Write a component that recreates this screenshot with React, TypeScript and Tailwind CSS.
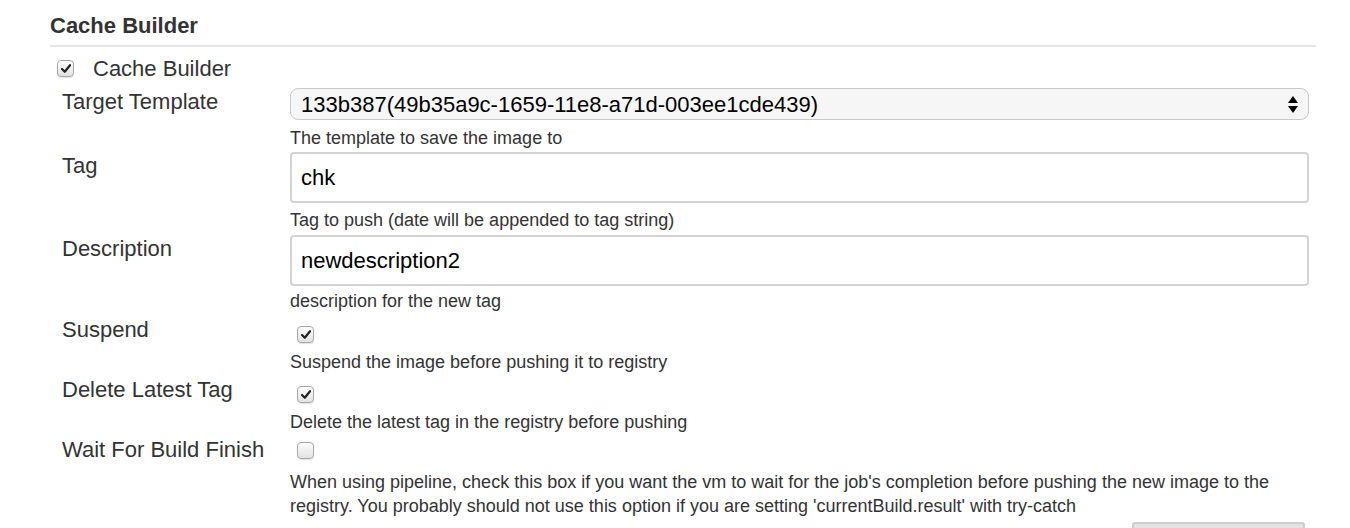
import React from 'react'

const CheckMark = () => (
    <svg width="10" height="9" viewBox="0 0 10 9" className="block">
        <path d="M1 5 L3.8 7.8 L9 1.2" fill="none" stroke="#222" strokeWidth="2.2" strokeLinecap="round" strokeLinejoin="round" />
    </svg>
)

const Checkbox = ({ checked }: { checked?: boolean }) => (
    <span className="inline-flex h-[17px] w-[17px] items-center justify-center rounded-[4px] border border-[#a8a8a8] bg-gradient-to-b from-[#fdfdfd] to-[#e2e2e2] shadow-[0_1px_1px_rgba(0,0,0,0.12)]">
        {checked && <CheckMark />}
    </span>
)

const Label = ({ children }: { children: React.ReactNode }) => (
    <div className="w-[240px] shrink-0 pl-[12px] text-[22px] leading-[28px] text-[#333]">{children}</div>
)

const Help = ({ children, className = '' }: { children: React.ReactNode; className?: string }) => (
    <div className={`pl-[240px] text-[18px] leading-[24px] text-[#333] ${className}`}>{children}</div>
)

const App = () => {
    return (
        <div className="min-h-[528px] overflow-hidden bg-white pl-[50px] pr-[34px] font-['Liberation_Sans',Arial,sans-serif]">
            {/* Section header */}
            <div className="flex h-[47px] items-center border-b-2 border-[#e6e6e6] pt-[6px]">
                <h2 className="text-[22px] font-bold text-[#333]">Cache Builder</h2>
            </div>

            <div className="mt-[9px] flex h-[24px] items-center pl-[7px]">
                <Checkbox checked />
                <span className="ml-[19px] text-[22px] text-[#333]">Cache Builder</span>
            </div>

            {/* Target Template */}
            <div className="mt-[8px] flex pr-[7px]">
                <Label>Target Template</Label>
                <div className="relative flex h-[32px] flex-1 items-center rounded-[8px] border border-[#c9c9c9] bg-[#f6f6f6] pl-[10px] text-[22px] text-black">
                    133b387(49b35a9c-1659-11e8-a71d-003ee1cde439)
                    <div className="absolute right-[10px] top-[7px] flex flex-col gap-[3px]">
                        <span className="block h-0 w-0 border-x-[5px] border-b-[7px] border-x-transparent border-b-black"></span>
                        <span className="block h-0 w-0 border-x-[5px] border-t-[7px] border-x-transparent border-t-black"></span>
                    </div>
                </div>
            </div>
            <Help className="mt-[6px]">The template to save the image to</Help>

            {/* Tag */}
            <div className="mt-[2px] flex pr-[7px]">
                <Label>Tag</Label>
                <div className="flex h-[51px] flex-1 items-center rounded-[4px] border-2 border-[#d4d4d4] pl-[9px] text-[22px] text-black">chk</div>
            </div>
            <Help className="mt-[5px]">Tag to push (date will be appended to tag string)</Help>

            {/* Description */}
            <div className="mt-[3px] flex pr-[7px]">
                <Label>Description</Label>
                <div className="flex h-[51px] flex-1 items-center rounded-[4px] border-2 border-[#d4d4d4] pl-[9px] text-[22px] text-black">newdescription2</div>
            </div>
            <Help className="mt-[3px]">description for the new tag</Help>

            {/* Suspend */}
            <div className="mt-[3px] flex h-[28px]">
                <Label>Suspend</Label>
                <div className="pl-[7px] pt-[6px]"><Checkbox checked /></div>
            </div>
            <Help className="mt-[6px]">Suspend the image before pushing it to registry</Help>

            {/* Delete Latest Tag */}
            <div className="mt-[2px] flex h-[28px]">
                <Label>Delete Latest Tag</Label>
                <div className="pl-[7px] pt-[6px]"><Checkbox checked /></div>
            </div>
            <Help className="mt-[6px]">Delete the latest tag in the registry before pushing</Help>

            {/* Wait For Build Finish */}
            <div className="mt-[2px] flex h-[28px]">
                <Label>Wait For Build Finish</Label>
                <div className="pl-[7px] pt-[6px]"><Checkbox /></div>
            </div>
            <Help className="mt-[6px] pr-[7px]">
                When using pipeline, check this box if you want the vm to wait for the job's completion before pushing the new image to the registry. You probably should not use this option if you are setting 'currentBuild.result' with try-catch
            </Help>

            <div className="mt-[4px] flex justify-end pr-[11px]">
                <div className="h-[20px] w-[173px] rounded-t-[3px] border-2 border-[#cfcfcf] bg-[#e2e2e2]"></div>
            </div>
        </div>
    )
}

export default App
